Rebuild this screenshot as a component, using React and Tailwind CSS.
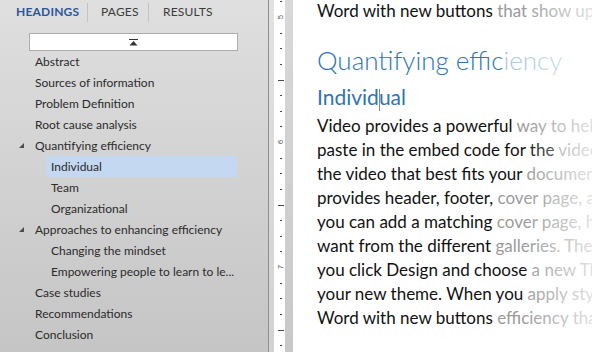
const outline = [
  { label: "Abstract", level: 1 },
  { label: "Sources of information", level: 1 },
  { label: "Problem Definition", level: 1 },
  { label: "Root cause analysis", level: 1 },
  { label: "Quantifying efficiency", level: 1, open: true },
  { label: "Individual", level: 2, selected: true },
  { label: "Team", level: 2 },
  { label: "Organizational", level: 2 },
  { label: "Approaches to enhancing efficiency", level: 1, open: true },
  { label: "Changing the mindset", level: 2 },
  { label: "Empowering people to learn to le...", level: 2 },
  { label: "Case studies", level: 1 },
  { label: "Recommendations", level: 1 },
  { label: "Conclusion", level: 1 },
];

const body = [
  ["Video provides a powerful", " way to help you prove your point."],
  ["paste in the embed code for the", " video you want to add."],
  ["the video that best fits your", " document."],
  ["provides header, footer,", " cover page, and text box designs"],
  ["you can add a matching", " cover page, header, and sidebar."],
  ["want from the different", " galleries. Themes and styles"],
  ["you click Design and choose", " a new Theme, the pictures"],
  ["your new theme. When you", " apply styles, your headings"],
  ["Word with new buttons", " efficiency that show up"],
];

function Ruler() {
  const ticks = [];
  for (let k = -1; k < 22; k++) {
    const y = 17 + k * 15.625;
    const m = ((k % 8) + 8) % 8;
    if (m === 0) {
      ticks.push(
        <text
          key={k}
          x="0"
          y="0"
          transform={`translate(8.5 ${y}) rotate(-90)`}
          fontSize="8"
          fill="#5a5a5a"
          textAnchor="middle"
          fontFamily="Liberation Sans, sans-serif"
        >
          {5 + k / 8}
        </text>
      );
    } else if (m === 4) {
      ticks.push(<rect key={k} x="4" y={Math.round(y)} width="6" height="1" fill="#4a4a4a" />);
    } else {
      ticks.push(<rect key={k} x="6" y={Math.round(y)} width="2" height="1" fill="#4a4a4a" />);
    }
  }
  return (
    <svg width="11" height="352" className="block">
      {ticks}
    </svg>
  );
}

function Tree() {
  return (
    <div className="flex flex-col">
      {outline.map((item) =>
        item.level === 1 ? (
          <div key={item.label} className="flex items-center h-[21px]">
            <div className="w-[35px] pl-[19px] flex items-center">
              {item.open && (
                <svg width="5" height="5" className="block">
                  <polygon points="5,0 5,5 0,5" fill="#4d4d4d" />
                </svg>
              )}
            </div>
            <span>{item.label}</span>
          </div>
        ) : (
          <div
            key={item.label}
            className={`flex items-center h-[21px] ml-[46px] mr-[31px] pl-[5px] ${
              item.selected ? "bg-[#c5d8f2]" : ""
            }`}
          >
            <span className="whitespace-nowrap">{item.label}</span>
          </div>
        )
      )}
    </div>
  );
}

export default function App() {
  return (
    <div className="w-[592px] h-[352px] flex overflow-hidden bg-white">
      <aside
        className="w-[268px] shrink-0 flex flex-col bg-gradient-to-b from-[#dfdfdf] to-[#c5c5c5] text-[12px] text-[#2b2b2b]"
        style={{ fontFamily: "Lato, 'Noto Sans', sans-serif" }}
      >
        <div className="flex items-center h-[24px] text-[12px] tracking-[0.2px]">
          <div className="w-[87px] pl-[16px] font-bold text-[#2b579a]">HEADINGS</div>
          <div className="w-px h-[19px] bg-[#c2c2c2]" />
          <div className="w-[60px] pl-[13px] text-[#3c3c3c]">PAGES</div>
          <div className="w-px h-[19px] bg-[#c2c2c2]" />
          <div className="pl-[14px] text-[#3c3c3c]">RESULTS</div>
        </div>
        <div className="mt-[9px] ml-[29px] w-[209px] h-[18px] bg-white border border-[#adadad] flex items-center justify-center">
          <svg width="9" height="7" className="block">
            <rect x="0" y="0" width="9" height="1" fill="#333" />
            <polygon points="4.5,2 8.5,6.5 0.5,6.5" fill="#333" />
          </svg>
        </div>
        <Tree />
      </aside>
      <div className="w-px shrink-0 bg-[#8e8e8e]" />
      <div className="w-[5px] shrink-0 bg-gradient-to-b from-[#e2e2e2] to-[#d2d2d2]" />
      <div className="w-[11px] shrink-0 bg-white">
        <Ruler />
      </div>
      <div className="w-[8px] shrink-0 bg-gradient-to-b from-[#d9d9d9] to-[#c8c8c8]" />
      <main
        className="relative flex-1 overflow-hidden pl-[24px] text-[#111]"
        style={{ fontFamily: "Lato, 'Open Sans', sans-serif" }}
      >
        <div className="-mt-px leading-[24px] text-[17px] whitespace-nowrap">
          Word with new buttons<span className="text-[#9a9a9a]"> that show up</span>
        </div>
        <div className="mt-[20px] leading-[34px] text-[26px] font-light text-[#2e74b5] whitespace-nowrap">
          Quantifying effic<span className="text-[#a9c7e6]">iency</span>
        </div>
        <div className="mt-[6px] leading-[28px] text-[21px] font-normal text-[#2e74b5] whitespace-nowrap">
          Individ
          <span className="inline-block w-px h-[22px] -mr-px bg-[#8a8a8a] align-middle" />
          ual
        </div>
        <div className="mt-[3px] text-[17px] leading-[24px]">
          {body.map(([dark, light]) => (
            <div key={dark} className="whitespace-nowrap">
              {dark}
              <span className="text-[#9a9a9a]">{light}</span>
            </div>
          ))}
        </div>
        <div className="absolute top-0 bottom-0 right-0 w-[70px] bg-gradient-to-r from-white/0 to-white/70" />
      </main>
    </div>
  );
}
